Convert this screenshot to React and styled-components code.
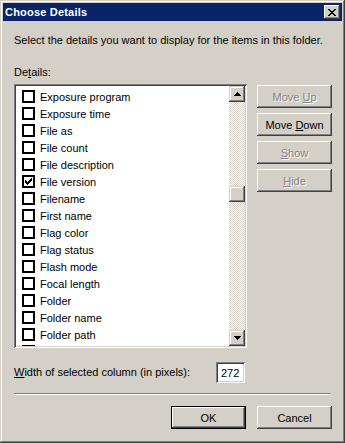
import React from 'react'
import styled, { createGlobalStyle } from 'styled-components'

const GlobalStyle = createGlobalStyle`
    html, body {
        margin: 0;
        padding: 0;
        background: #d4d0c8;
    }
    body {
        font-family: "Liberation Sans", Arial, sans-serif;
        font-size: 11px;
        color: #000;
    }
    * {
        box-sizing: border-box;
    }
`

const raised = `
    box-shadow: inset -1px -1px #404040, inset 1px 1px #ffffff,
        inset -2px -2px #808080, inset 2px 2px #d4d0c8;
`

const sunken = `
    box-shadow: inset 1px 1px #808080, inset -1px -1px #ffffff,
        inset 2px 2px #404040, inset -2px -2px #d4d0c8;
`

const Window = styled.div`
    width: 345px;
    height: 443px;
    display: flex;
    flex-direction: column;
    padding: 3px;
    background: #d4d0c8;
    box-shadow: inset -1px -1px #404040, inset 1px 1px #d4d0c8,
        inset -2px -2px #808080, inset 2px 2px #ffffff;
`

const TitleBar = styled.div`
    height: 18px;
    display: flex;
    align-items: center;
    justify-content: space-between;
    padding: 0 2px;
    background: #0a246a;
    color: #fff;
    font-weight: bold;
    font-size: 11px;
    letter-spacing: 0.2px;
`

const CloseButton = styled.div`
    width: 16px;
    height: 14px;
    display: flex;
    align-items: center;
    justify-content: center;
    background: #d4d0c8;
    ${raised}
`

const Body = styled.div`
    flex: 1;
    display: flex;
    flex-direction: column;
    padding: 13px 10px 0 11px;
`

const Text = styled.div`
    line-height: 13px;
    white-space: nowrap;
    margin-top: ${props => props.top || 0}px;
    margin-bottom: ${props => props.bottom || 0}px;
`

const MainRow = styled.div`
    display: flex;
    align-items: flex-start;
    gap: 10px;
`

const ListBox = styled.div`
    width: 233px;
    height: 264px;
    display: flex;
    padding: 2px;
    background: #fff;
    ${sunken}
`

const Rows = styled.div`
    flex: 1;
    overflow: hidden;
    padding: 2px 0 0 6px;
`

const Row = styled.div`
    height: 17px;
    display: flex;
    align-items: center;
    gap: 5px;
    white-space: nowrap;
`

const Box = styled.div`
    width: 13px;
    height: 13px;
    flex: none;
    border: 2px solid #000;
    background: #fff;
    display: flex;
    align-items: center;
    justify-content: center;
`

const ScrollBar = styled.div`
    width: 16px;
    display: flex;
    flex-direction: column;
`

const ScrollButton = styled.div`
    width: 16px;
    height: 16px;
    flex: none;
    display: flex;
    align-items: center;
    justify-content: center;
    background: #d4d0c8;
    box-shadow: inset -1px -1px #404040, inset 1px 1px #d4d0c8,
        inset -2px -2px #808080, inset 2px 2px #ffffff;
`

const Track = styled.div`
    flex: 1;
    padding-top: ${props => props.offset}px;
    background: repeating-conic-gradient(#d4d0c8 0% 25%, #ffffff 0% 50%) 0 0 / 2px 2px;
`

const Thumb = styled(ScrollButton)``

const SideButtons = styled.div`
    display: flex;
    flex-direction: column;
    gap: 5px;
    margin-top: 1px;
`

const Button = styled.div`
    width: 75px;
    height: 23px;
    display: flex;
    align-items: center;
    justify-content: center;
    white-space: pre;
    background: #d4d0c8;
    color: ${props => props.disabled ? '#808080' : '#000'};
    text-shadow: ${props => props.disabled ? '1px 1px 0 #ffffff' : 'none'};
    ${props => props.default ? `
        border: 1px solid #000;
        box-shadow: inset -1px -1px #404040, inset 1px 1px #ffffff,
            inset -2px -2px #808080;
    ` : raised}
`

const Key = styled.span`
    text-decoration: underline;
`

const WidthRow = styled.div`
    display: grid;
    grid-template-columns: 202px 29px;
    align-items: center;
    margin-top: 14px;
`

const Field = styled.div`
    height: 21px;
    display: flex;
    align-items: center;
    padding-left: 5px;
    background: #fff;
    ${sunken}
`

const Separator = styled.div`
    width: 317px;
    height: 2px;
    margin-top: 10px;
    border-top: 1px solid #808080;
    border-bottom: 1px solid #fff;
`

const Footer = styled.div`
    display: flex;
    justify-content: flex-end;
    gap: 11px;
    margin-top: 11px;
`

const CloseGlyph = () => {
    const rows = ['XX....XX', '.XX..XX.', '..XXXX..', '...XX...', '..XXXX..', '.XX..XX.', 'XX....XX']
    return (
        <svg width="8" height="7" shapeRendering="crispEdges">
            {rows.map((r, y) => r.split('').map((c, x) => c === 'X' &&
                <rect key={x + '-' + y} x={x} y={y} width="1" height="1" fill="#000" />))}
        </svg>
    )
}

const Check = () => {
    const tops = [2, 3, 4, 3, 2, 1, 0]
    return (
        <svg width="7" height="7" shapeRendering="crispEdges">
            {tops.map((t, x) => <rect key={x} x={x} y={t} width="1" height="3" fill="#000" />)}
        </svg>
    )
}

const Arrow = ({ down }) => (
    <svg width="7" height="4" shapeRendering="crispEdges">
        {[0, 1, 2, 3].map(i => {
            const y = down ? i : 3 - i
            return <rect key={i} x={i} y={y} width={7 - i * 2} height="1" fill="#000" />
        })}
    </svg>
)

const items = [
    'Exposure program', 'Exposure time', 'File as', 'File count', 'File description',
    'File version', 'Filename', 'First name', 'Flag color', 'Flag status', 'Flash mode',
    'Focal length', 'Folder', 'Folder name', 'Folder path',
]

const App = () => (
    <Window>
        <GlobalStyle />
        <TitleBar>
            <span>Choose Details</span>
            <CloseButton><CloseGlyph /></CloseButton>
        </TitleBar>
        <Body>
            <Text>Select the details you want to display for the items in this folder.</Text>
            <Text top={19} bottom={5}>De<Key>t</Key>ails:</Text>
            <MainRow>
                <ListBox>
                    <Rows>
                        {items.map(name => (
                            <Row key={name}>
                                <Box>{name === 'File version' && <Check />}</Box>
                                <span>{name}</span>
                            </Row>
                        ))}
                        {/* next row, scrolled mostly out of view */}
                        <Row><Box /></Row>
                    </Rows>
                    <ScrollBar>
                        <ScrollButton><Arrow /></ScrollButton>
                        <Track offset={84}><Thumb /></Track>
                        <ScrollButton><Arrow down /></ScrollButton>
                    </ScrollBar>
                </ListBox>
                <SideButtons>
                    <Button disabled><span>Move <Key>U</Key>p</span></Button>
                    <Button><span>Move <Key>D</Key>own</span></Button>
                    <Button disabled><span><Key>S</Key>how</span></Button>
                    <Button disabled><span><Key>H</Key>ide</span></Button>
                </SideButtons>
            </MainRow>
            <WidthRow>
                <Text><Key>W</Key>idth of selected column (in pixels):</Text>
                <Field>272</Field>
            </WidthRow>
            <Separator />
            <Footer>
                <Button default>OK</Button>
                <Button>Cancel</Button>
            </Footer>
        </Body>
    </Window>
)

export default App
